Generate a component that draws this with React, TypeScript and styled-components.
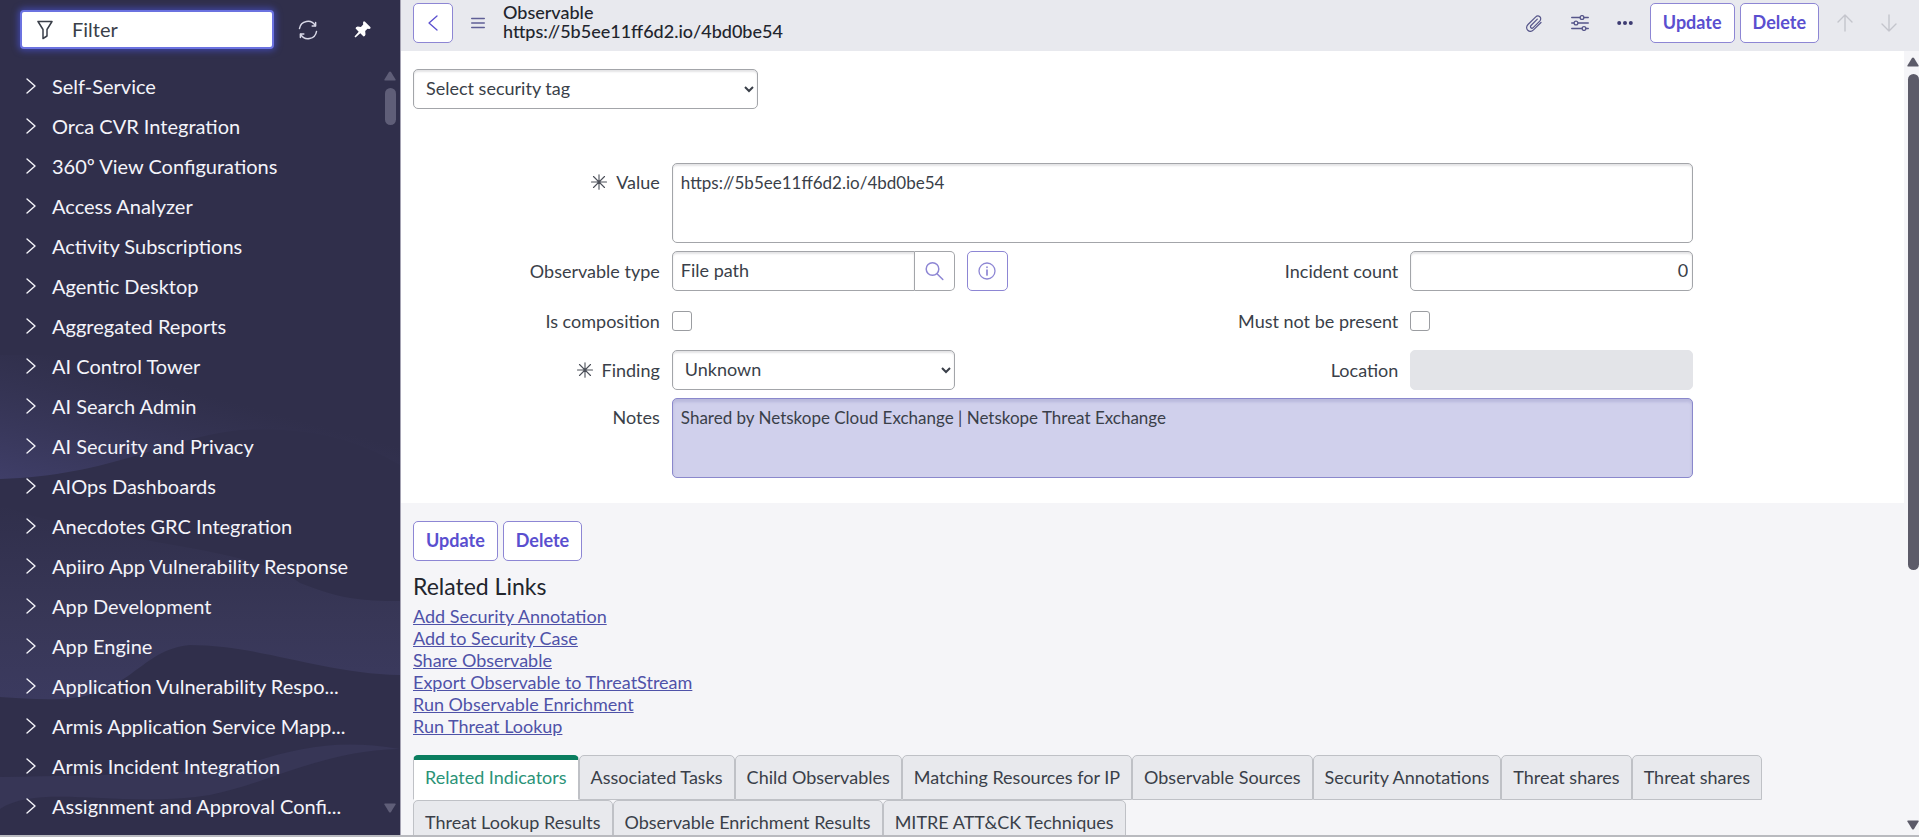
import React from "react";
import styled, { createGlobalStyle, css } from "styled-components";

const GlobalStyle = createGlobalStyle`
  *, *::before, *::after { box-sizing: border-box; }
  body { margin: 0; background: #f5f6f8; }
  body, button, input, select, textarea { font-family: Lato, "Open Sans", sans-serif; }
`;

const colors = {
  navBg: "#302f4b",
  navText: "#f4f4fa",
  header: "#e8e9ee",
  pane: "#f5f5f8",
  line: "#a3a5a9",
  text: "#3a3f49",
  title: "#22252d",
  accent: "#5a4fcf",
  accentLine: "#8d86d4",
  link: "#4f52a8",
  green: "#0a7d5f",
};

const Shell = styled.div`
  display: flex;
  height: 100vh;
  overflow: hidden;
  border-bottom: 2px solid #b9babf;
`;

/* ---------- navigation ---------- */

const Sidebar = styled.nav`
  position: relative;
  display: flex;
  flex-direction: column;
  flex: none;
  width: 401px;
  background: ${colors.navBg};
  border-right: 1px solid #a5a3b3;
`;

const Waves = styled.svg`
  position: absolute;
  left: 0;
  bottom: 0;
  width: 100%;
  height: 480px;
`;

const NavTop = styled.div`
  position: relative;
  display: flex;
  align-items: center;
  padding: 10px 26px 0 20px;
`;

const FilterBox = styled.label`
  display: flex;
  align-items: center;
  gap: 19px;
  width: 254px;
  height: 39px;
  padding-left: 15px;
  background: #fff;
  border: 2px solid #6b72e0;
  border-radius: 4px;
  box-shadow: 0 0 6px 2px #3f45a0;
`;

const FilterInput = styled.input`
  flex: 1;
  min-width: 0;
  border: 0;
  outline: 0;
  padding: 0 0 2px;
  background: transparent;
  font-size: 20px;
  color: ${colors.text};
  &::placeholder { color: ${colors.text}; opacity: 1; }
`;

const NavIcon = styled.button<{ $gap: number }>`
  display: flex;
  justify-content: center;
  width: 24px;
  margin-left: ${(p) => p.$gap}px;
  padding: 0;
  border: 0;
  background: none;
  color: #d9d9e8;
`;

const NavBody = styled.div`
  position: relative;
  display: flex;
  flex: 1;
  min-height: 0;
  padding-top: 18px;
`;

const NavList = styled.ul`
  flex: 1;
  min-width: 0;
  margin: 0;
  padding: 0 0 0 26px;
  list-style: none;
  overflow: hidden;
`;

const NavItem = styled.button`
  display: flex;
  align-items: center;
  gap: 16px;
  width: 100%;
  height: 40px;
  padding: 0 0 2px;
  border: 0;
  background: none;
  color: ${colors.navText};
  font-size: 20px;
  line-height: 24px;
  text-align: left;
  white-space: nowrap;
  svg { flex: none; }
`;

const ScrollTrack = styled.div<{ $color: string; $edge: number }>`
  display: flex;
  flex-direction: column;
  flex: none;
  align-items: center;
  justify-content: space-between;
  width: ${(p) => p.$edge + 12}px;
  padding-right: ${(p) => p.$edge}px;
  color: ${(p) => p.$color};
`;

const ScrollTop = styled.div`
  display: flex;
  flex-direction: column;
  align-items: center;
  gap: 7px;
  flex: 1;
`;

const Thumb = styled.div<{ $size: string }>`
  width: 11px;
  height: ${(p) => p.$size};
  border-radius: 6px;
  background: currentColor;
`;

/* ---------- record pane ---------- */

const Main = styled.main`
  display: flex;
  flex-direction: column;
  flex: 1;
  min-width: 0;
  background: ${colors.pane};
`;

const Header = styled.header`
  display: flex;
  align-items: center;
  height: 51px;
  padding: 0 22px 6px 12px;
  background: ${colors.header};
`;

const boxed = css`
  height: 40px;
  border: 1px solid ${colors.accentLine};
  border-radius: 5px;
  background: #fff;
  color: ${colors.accent};
`;

const Button = styled.button`
  ${boxed}
  padding: 0 12px 2px;
  font-size: 18px;
  font-weight: 700;
`;

const SquareButton = styled.button<{ $w?: number }>`
  ${boxed}
  display: flex;
  align-items: center;
  justify-content: center;
  width: ${(p) => p.$w ?? 40}px;
  padding: 0;
`;

const MenuButton = styled.button`
  display: flex;
  padding: 0;
  margin: 0 18px;
  border: 0;
  background: none;
  color: #5f5f96;
`;

const Title = styled.h1`
  flex: 1;
  margin: 0;
  padding-bottom: 2px;
  font-size: 18px;
  line-height: 19px;
  font-weight: 500;
  color: ${colors.title};
  span { display: block; }
`;

const Tools = styled.div`
  display: flex;
  align-items: center;
  gap: 28px;
  margin-right: 17px;
`;

const Arrows = styled.div`
  display: flex;
  gap: 28px;
  margin-left: 18px;
`;

const ToolButton = styled.button<{ $muted?: boolean }>`
  display: flex;
  padding: 0;
  border: 0;
  background: none;
  color: ${(p) => (p.$muted ? "#c4c5cc" : "#56568a")};
`;

const ButtonRow = styled.div`
  display: flex;
  gap: 5px;
`;

const Scroller = styled.div`
  display: flex;
  flex: 1;
  min-height: 0;
`;

const Content = styled.div`
  flex: 1;
  min-width: 0;
  overflow: hidden;
`;

const Form = styled.form`
  padding: 18px 0 25px 12px;
  background: #fff;
`;

const field = css`
  border: 1px solid ${colors.line};
  border-radius: 5px;
  background: #fff;
  box-shadow: inset 0 2px 2px #e4e4e6;
  font-size: 18px;
  color: ${colors.text};
`;

const Select = styled.select<{ $w?: string }>`
  ${field}
  display: block;
  width: ${(p) => p.$w ?? "100%"};
  height: 40px;
  padding: 0 0 2px 8px;
`;

const Grid = styled.div`
  display: grid;
  grid-template-columns: 259fr 283fr 456fr 283fr 211fr;
  row-gap: 8px;
  margin-top: 54px;
`;

const Label = styled.label<{ $top?: boolean; $right?: boolean }>`
  display: flex;
  justify-content: flex-end;
  align-items: center;
  align-self: ${(p) => (p.$top ? "start" : "center")};
  grid-column: ${(p) => (p.$right ? 3 : 1)};
  gap: 9px;
  height: ${(p) => (p.$top ? 38 : 40)}px;
  padding-right: 12px;
  font-size: 18px;
  color: ${colors.text};
`;

const Input = styled.input<{ $right?: boolean }>`
  ${field}
  width: 100%;
  min-width: 0;
  height: 40px;
  padding: 0 ${(p) => (p.$right ? 4 : 8)}px 2px;
  text-align: ${(p) => (p.$right ? "right" : "left")};
  &:disabled {
    border-color: #e3e4e8;
    background: #e3e4e8;
    box-shadow: none;
  }
`;

const TextArea = styled.textarea<{ $tinted?: boolean }>`
  ${field}
  display: block;
  grid-column: 2 / 5;
  height: 80px;
  padding: 8px;
  font-size: 17px;
  line-height: 22px;
  resize: none;
  ${(p) =>
    p.$tinted &&
    css`
      border-color: #8a88cc;
      background: #d0d0ec;
      box-shadow: inset 0 3px 3px #b9b9dc;
    `}
`;

const Reference = styled.div`
  display: flex;
  ${Input} {
    border-radius: 5px 0 0 5px;
  }
`;

const Lookup = styled.button`
  display: flex;
  align-items: center;
  justify-content: center;
  flex: 0 0 40px;
  height: 40px;
  padding: 0;
  border: 1px solid ${colors.line};
  border-left: 0;
  border-radius: 0 5px 5px 0;
  background: #fff;
  color: #8d86d4;
`;

/* The preview button and the next field's label share one cell of the grid. */
const SharedCell = styled.div`
  display: flex;
  justify-content: space-between;
  padding-left: 12px;
  ${SquareButton} { color: #8d86d4; }
`;

const CheckCell = styled.div`
  display: flex;
  align-items: center;
  height: 43px;
`;

const Check = styled.input`
  appearance: none;
  width: 20px;
  height: 20px;
  margin: 0;
  border: 1px solid #9b9da1;
  border-radius: 3px;
  background: #fff;
`;

const Related = styled.section`
  padding: 18px 0 0 12px;
`;

const SubTitle = styled.h2`
  margin: 11px 0 5px;
  font-size: 23px;
  line-height: 28px;
  font-weight: 400;
  color: ${colors.title};
`;

const Links = styled.ul`
  margin: 0;
  padding: 0;
  list-style: none;
  font-size: 18px;
  line-height: 22px;
  a { color: ${colors.link}; }
`;

const Tabs = styled.div`
  display: flex;
  flex-wrap: wrap;
  margin-top: 18px;
`;

const Tab = styled.button`
  height: 45px;
  padding: 0 11px 1px;
  border: 1px solid #bfc1c6;
  border-radius: 5px 5px 0 0;
  background: #e8e9ed;
  font-size: 18px;
  color: ${colors.text};
  &[aria-selected="true"] {
    border-top: 5px solid ${colors.green};
    border-bottom-color: #fff;
    background: #fff;
    padding-bottom: 5px;
    color: #2b9377;
  }
`;

/* ---------- drawings ---------- */

const stroke = { fill: "none", stroke: "currentColor", strokeLinecap: "round", strokeLinejoin: "round" } as const;

const Triangle = ({ down }: { down?: boolean }) => (
  <svg width="12" height="10" viewBox="0 0 12 10" fill="currentColor" aria-hidden="true">
    <path d={down ? "M1 0.5h10q1 0 .6 1L7 9q-1 1-2 0L.4 1.500q-.4-1 .6-1z" : "M1 9.500h10q1 0 .6-1L7 1Q6 0 5 1L.4 8.500q-.4 1 .6 1z"} />
  </svg>
);

const Funnel = () => (
  <svg width="16" height="20" viewBox="0 0 16 20" {...stroke} stroke="#3a3f49" strokeWidth="1.500" aria-hidden="true">
    <path d="M1 1.500h14L10 9.500v6.500L6 18.500V9.500z" />
  </svg>
);

const Refresh = () => (
  <svg width="20" height="20" viewBox="0 0 20 20" {...stroke} strokeWidth="1.500" aria-hidden="true">
    <path d="M1.500 8.500A8.500 8.500 0 0 1 17.300 5.700M18.500 11.500A8.500 8.500 0 0 1 2.700 14.300" />
    <path d="M17.600 2.600v3.400h-3.400M2.400 17.400v-3.400h3.400" />
  </svg>
);

const Pin = () => (
  <svg width="17" height="17" viewBox="0 0 17 17" fill="#fff" aria-hidden="true">
    <path d="M9.500.6Q10.200 0 11 .7L16.300 6q.7.800 0 1.500l-1 .4-1.800-.2-2.300 2.400.3 3.300-.7 1.600-1.300.5-3.200-3.200L1.500 16.500.500 15.500l4.200-4.800L1.600 7.600l.4-1.400 1.700-.6 3.200.3L9.200 3.600 9 1.700z" />
  </svg>
);

const Chevron = () => (
  <svg width="10" height="16" viewBox="0 0 10 16" {...stroke} strokeWidth="1.400" aria-hidden="true">
    <path d="M1 1l8 7-8 7" />
  </svg>
);

const Back = () => (
  <svg width="10" height="16" viewBox="0 0 10 16" {...stroke} strokeWidth="1.300" aria-hidden="true">
    <path d="M9 1L1 8l8 7" />
  </svg>
);

const Menu = () => (
  <svg width="14" height="12" viewBox="0 0 14 12" {...stroke} strokeWidth="1.400" aria-hidden="true">
    <path d="M.7 1.500h12.600M.7 6h12.600M.7 10.500h12.600" />
  </svg>
);

const Clip = () => (
  <svg width="18" height="18" viewBox="0 0 18 18" {...stroke} strokeWidth="1.200" aria-hidden="true">
    <path d="M12.300 5.200L6 11.500c-1.600 1.700.6 3.700 2.200 2.100l6.500-6.500c3-3.200-1.200-7-4.200-4L3 10.500c-4 4.200 1.600 9.200 5.500 5.300l7.500-7.300" />
  </svg>
);

const Sliders = () => (
  <svg width="18" height="16" viewBox="0 0 18 16" {...stroke} strokeWidth="1.300" aria-hidden="true">
    <path d="M.7 2.500h8.300M13 2.500h4.300M.7 8h2.300M7 8h10.300M.7 13.500h10.300M15 13.500h2.300" />
    <circle cx="11" cy="2.500" r="1.900" />
    <circle cx="5" cy="8" r="1.900" />
    <circle cx="13" cy="13.500" r="1.900" />
  </svg>
);

const Dots = () => (
  <svg width="16" height="6" viewBox="0 0 16 6" fill="#3d3c72" aria-hidden="true">
    <circle cx="2.200" cy="3" r="2" />
    <circle cx="8" cy="3" r="2" />
    <circle cx="13.800" cy="3" r="2" />
  </svg>
);

const ArrowIcon = ({ down }: { down?: boolean }) => (
  <svg width="16" height="18" viewBox="0 0 16 18" {...stroke} strokeWidth="1.400" aria-hidden="true">
    <path d={down ? "M8 1v16M1 10l7 7 7-7" : "M8 17V1M1 8l7-7 7 7"} />
  </svg>
);

const Asterisk = () => (
  <svg width="16" height="16" viewBox="0 0 16 16" {...stroke} stroke="#4c5059" strokeWidth="1.100" aria-hidden="true">
    <path d="M8 .8v14.400M.5 8h15M2.500 2.500l11 11M13.500 2.500l-11 11" />
  </svg>
);

const Glass = () => (
  <svg width="19" height="20" viewBox="0 0 19 20" {...stroke} strokeWidth="1.500" aria-hidden="true">
    <circle cx="7.500" cy="8" r="6.300" />
    <path d="M12 12.700l5.800 5.800" />
  </svg>
);

const Info = () => (
  <svg width="18" height="18" viewBox="0 0 18 18" {...stroke} strokeWidth="1.300" aria-hidden="true">
    <circle cx="9" cy="9" r="8" />
    <path d="M9 8v5M9 5v.3" strokeWidth="1.700" />
  </svg>
);

const WaveArt = () => (
  <Waves viewBox="0 0 400 480" preserveAspectRatio="none" aria-hidden="true">
    <defs>
      <linearGradient id="crest" x1="0.700" y1="0.200" x2="0" y2="1">
        <stop offset="0.200" stopColor="#3c3b60" stopOpacity="0" />
        <stop offset="1" stopColor="#3f3e68" />
      </linearGradient>
      <linearGradient id="swell" x1="0" y1="0" x2="0" y2="1">
        <stop offset="0" stopColor="#383758" stopOpacity="0" />
        <stop offset="0.600" stopColor="#383757" />
        <stop offset="1" stopColor="#3b3a5f" />
      </linearGradient>
    </defs>
    <path fill="url(#crest)" d="M0 0H400V110C350 80 300 72 240 75C170 82 110 121 0 124z" />
    <path fill="url(#swell)" d="M0 150C110 190 250 190 300 228C340 244 360 246 400 246V320C320 318 260 290 190 290C140 294 130 342 60 344C40 345 20 343 0 342z" />
    <path fill="#373656" d="M0 422C110 420 190 420 250 408C300 392 340 384 400 394C320 396 270 428 210 440C120 454 40 428 0 454z" />
  </Waves>
);

/* ---------- data ---------- */

const navItems = [
  "Self-Service", "Orca CVR Integration", "360º View Configurations", "Access Analyzer",
  "Activity Subscriptions", "Agentic Desktop", "Aggregated Reports", "AI Control Tower",
  "AI Search Admin", "AI Security and Privacy", "AIOps Dashboards", "Anecdotes GRC Integration",
  "Apiiro App Vulnerability Response", "App Development", "App Engine",
  "Application Vulnerability Respo...", "Armis Application Service Mapp...",
  "Armis Incident Integration", "Assignment and Approval Confi...",
];

const links = [
  "Add Security Annotation", "Add to Security Case", "Share Observable",
  "Export Observable to ThreatStream", "Run Observable Enrichment", "Run Threat Lookup",
];

const tabs = [
  "Related Indicators", "Associated Tasks", "Child Observables", "Matching Resources for IP",
  "Observable Sources", "Security Annotations", "Threat shares", "Threat shares",
  "Threat Lookup Results", "Observable Enrichment Results", "MITRE ATT&CK Techniques",
];

const NavScroll = styled.div`
  display: flex;
  padding: 4px 0 22px;
`;

const PaneScroll = styled.div`
  display: flex;
  padding: 6px 0 5px 3px;
`;

export default function App() {
  return (
    <>
      <GlobalStyle />
      <Shell>
        <Sidebar aria-label="All applications">
          <WaveArt />
          <NavTop>
            <FilterBox>
              <Funnel />
              <FilterInput aria-label="Filter" placeholder="Filter" />
            </FilterBox>
            <NavIcon $gap={23} type="button" aria-label="Refresh"><Refresh /></NavIcon>
            <NavIcon $gap={32} type="button" aria-label="Unpin"><Pin /></NavIcon>
          </NavTop>
          <NavBody>
            <NavList>
              {navItems.map((name) => (
                <li key={name}>
                  <NavItem type="button"><Chevron /><span>{name}</span></NavItem>
                </li>
              ))}
            </NavList>
            <NavScroll>
              <ScrollTrack $color="#5f5e78" $edge={4}>
                <ScrollTop><Triangle /><Thumb $size="37px" /></ScrollTop>
                <Triangle down />
              </ScrollTrack>
            </NavScroll>
          </NavBody>
        </Sidebar>

        <Main>
          <Header>
            <SquareButton type="button" aria-label="Back"><Back /></SquareButton>
            <MenuButton type="button" aria-label="Menu"><Menu /></MenuButton>
            <Title><span>Observable</span><span>https://5b5ee11ff6d2.io/4bd0be54</span></Title>
            <Tools>
              <ToolButton type="button" aria-label="Attachments"><Clip /></ToolButton>
              <ToolButton type="button" aria-label="Personalize form"><Sliders /></ToolButton>
              <ToolButton type="button" aria-label="More options"><Dots /></ToolButton>
            </Tools>
            <ButtonRow>
              <Button type="button">Update</Button>
              <Button type="button">Delete</Button>
            </ButtonRow>
            <Arrows>
              <ToolButton $muted type="button" aria-label="Previous record"><ArrowIcon /></ToolButton>
              <ToolButton $muted type="button" aria-label="Next record"><ArrowIcon down /></ToolButton>
            </Arrows>
          </Header>

          <Scroller>
            <Content>
              <Form>
                <Select $w="345px" aria-label="Security tag" defaultValue="Select security tag">
                  <option>Select security tag</option>
                </Select>
                <Grid>
                  <Label $top htmlFor="value"><Asterisk />Value</Label>
                  <TextArea id="value" defaultValue="https://5b5ee11ff6d2.io/4bd0be54" />

                  <Label htmlFor="type">Observable type</Label>
                  <Reference>
                    <Input id="type" defaultValue="File path" />
                    <Lookup type="button" aria-label="Look up observable type"><Glass /></Lookup>
                  </Reference>
                  <SharedCell>
                    <SquareButton $w={41} type="button" aria-label="Preview record"><Info /></SquareButton>
                    <Label htmlFor="count">Incident count</Label>
                  </SharedCell>
                  <Input $right id="count" defaultValue="0" />

                  <Label htmlFor="composition">Is composition</Label>
                  <CheckCell><Check type="checkbox" id="composition" /></CheckCell>
                  <Label $right htmlFor="absent">Must not be present</Label>
                  <CheckCell><Check type="checkbox" id="absent" /></CheckCell>

                  <Label htmlFor="finding"><Asterisk />Finding</Label>
                  <Select id="finding" defaultValue="Unknown"><option>Unknown</option></Select>
                  <Label $right htmlFor="location">Location</Label>
                  <Input id="location" disabled />

                  <Label $top htmlFor="notes">Notes</Label>
                  <TextArea $tinted id="notes" defaultValue="Shared by Netskope Cloud Exchange | Netskope Threat Exchange" />
                </Grid>
              </Form>

              <Related>
                <ButtonRow>
                  <Button type="button">Update</Button>
                  <Button type="button">Delete</Button>
                </ButtonRow>
                <SubTitle>Related Links</SubTitle>
                <Links>
                  {links.map((name) => (
                    <li key={name}><a href="#related">{name}</a></li>
                  ))}
                </Links>
                <Tabs role="tablist">
                  {tabs.map((name, i) => (
                    <Tab key={i} type="button" role="tab" aria-selected={i === 0}>{name}</Tab>
                  ))}
                </Tabs>
              </Related>
            </Content>
            <PaneScroll>
              <ScrollTrack $color="#5c5b69" $edge={0}>
                <ScrollTop><Triangle /><Thumb $size="65%" /></ScrollTop>
                <Triangle down />
              </ScrollTrack>
            </PaneScroll>
          </Scroller>
        </Main>
      </Shell>
    </>
  );
}
